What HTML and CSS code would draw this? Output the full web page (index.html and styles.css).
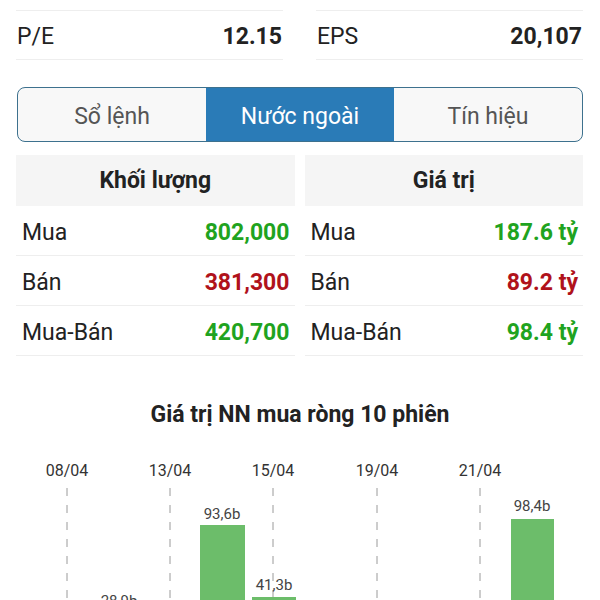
FILE: index.html
```html
<!DOCTYPE html>
<html lang="vi">
<head>
    <meta charset="UTF-8">
    <meta name="viewport" content="width=device-width, initial-scale=1.0">
    <title>Nước ngoài</title>
    <link rel="stylesheet" href="styles.css">
</head>
<body>
    <!-- Key stats -->
    <section class="stats">
        <div class="stat-row">
            <span class="stat-label">P/E</span>
            <span class="stat-value">12.15</span>
        </div>
        <div class="stat-row">
            <span class="stat-label">EPS</span>
            <span class="stat-value">20,107</span>
        </div>
    </section>

    <!-- Tabs -->
    <nav class="tabs">
        <div class="tab">Sổ lệnh</div>
        <div class="tab active">Nước ngoài</div>
        <div class="tab">Tín hiệu</div>
    </nav>

    <!-- Foreign trading tables -->
    <section class="trade-tables">
        <div class="trade-table">
            <div class="trade-head">Khối lượng</div>
            <div class="trade-row"><span>Mua</span><span class="up">802,000</span></div>
            <div class="trade-row"><span>Bán</span><span class="down">381,300</span></div>
            <div class="trade-row"><span>Mua-Bán</span><span class="up">420,700</span></div>
        </div>
        <div class="trade-table">
            <div class="trade-head">Giá trị</div>
            <div class="trade-row"><span>Mua</span><span class="up">187.6 tỷ</span></div>
            <div class="trade-row"><span>Bán</span><span class="down">89.2 tỷ</span></div>
            <div class="trade-row"><span>Mua-Bán</span><span class="up">98.4 tỷ</span></div>
        </div>
    </section>

    <!-- Net buy chart -->
    <section class="chart">
        <h2 class="chart-title">Giá trị NN mua ròng 10 phiên</h2>
        <svg class="chart-svg" width="600" height="220" viewBox="0 0 600 220">
            <g class="grid-lines">
                <line x1="67" y1="48" x2="67" y2="220"/>
                <line x1="170" y1="48" x2="170" y2="220"/>
                <line x1="273" y1="48" x2="273" y2="220"/>
                <line x1="377" y1="48" x2="377" y2="220"/>
                <line x1="480" y1="48" x2="480" y2="220"/>
            </g>
            <g class="date-labels">
                <text x="67" y="36">08/04</text>
                <text x="170" y="36">13/04</text>
                <text x="273" y="36">15/04</text>
                <text x="377" y="36">19/04</text>
                <text x="480" y="36">21/04</text>
            </g>
            <g class="bars">
                <rect x="97" y="174" width="44" height="60"/>
                <rect x="200" y="85" width="45" height="150"/>
                <rect x="252" y="157" width="44" height="80"/>
                <rect x="511" y="79" width="43" height="150"/>
            </g>
            <g class="bar-labels">
                <text x="119" y="166">28,9b</text>
                <text x="222" y="79">93,6b</text>
                <text x="274" y="150">41,3b</text>
                <text x="532" y="71">98,4b</text>
            </g>
        </svg>
    </section>
</body>
</html>
```

FILE: styles.css
```css
/* Basic reset */
* {
    margin: 0;
    padding: 0;
    box-sizing: border-box;
}

body {
    font-family: Roboto, "Noto Sans", Arial, sans-serif;
    background-color: #ffffff;
    color: #222;
    padding-top: 10px;
    overflow: hidden;
}

/* Key stats */
.stats {
    display: grid;
    grid-template-columns: 1fr 1fr;
    column-gap: 33px;
    padding: 0 17px 0 16px;
}

.stat-row {
    display: flex;
    justify-content: space-between;
    align-items: center;
    height: 50px;
    border-top: 1px solid #eeeeee;
    border-bottom: 1px solid #eeeeee;
    font-size: 23px;
    padding: 3px 1px 0 1px;
}

.stat-value {
    font-weight: bold;
}

/* Tabs */
.tabs {
    display: grid;
    grid-template-columns: 1fr 1fr 1fr;
    margin: 27px 17px 0 17px;
    height: 55px;
    border: 1.5px solid #3d718e;
    border-radius: 8px;
    overflow: hidden;
    background-color: #f8f8f8;
}

.tab {
    display: flex;
    justify-content: center;
    align-items: center;
    font-size: 23px;
    color: #555;
    padding-top: 3px;
}

.tab.active {
    background-color: #2a7bb7;
    color: #ffffff;
}

/* Trade tables */
.trade-tables {
    display: grid;
    grid-template-columns: 1fr 1fr;
    column-gap: 10px;
    padding: 0 17px 0 16px;
    margin-top: 13px;
}

.trade-head {
    background-color: #f5f5f5;
    height: 51px;
    display: flex;
    justify-content: center;
    align-items: center;
    font-size: 23px;
    font-weight: bold;
}

.trade-row {
    display: flex;
    justify-content: space-between;
    align-items: center;
    height: 50px;
    border-bottom: 1px solid #eeeeee;
    font-size: 23px;
    padding: 3px 5px 0 6px;
}

.trade-row .up,
.trade-row .down {
    font-weight: bold;
}

.up {
    color: #1fa320;
}

.down {
    color: #b0121b;
}

/* Chart */
.chart {
    margin-top: 45px;
}

.chart-title {
    text-align: center;
    font-size: 23px;
    font-weight: bold;
    color: #222;
    line-height: 28px;
}

.chart-svg {
    display: block;
    margin-top: 11px;
}

.grid-lines line {
    stroke: #9a9a9a;
    stroke-width: 1;
    stroke-dasharray: 8 9;
}

.date-labels text {
    font-size: 16px;
    fill: #333;
    text-anchor: middle;
}

.bars rect {
    fill: #6cbd6a;
}

.bar-labels text {
    font-size: 15px;
    fill: #444;
    text-anchor: middle;
}
```
